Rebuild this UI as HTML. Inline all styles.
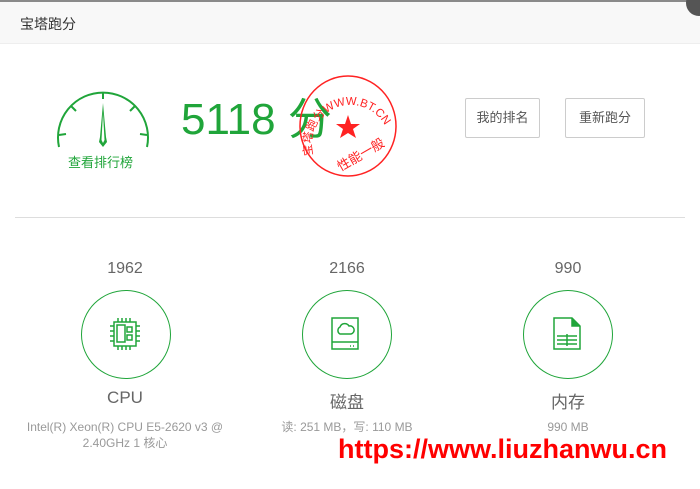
<!DOCTYPE html>
<html><head><meta charset="utf-8"><style>
*{margin:0;padding:0;box-sizing:border-box}
body{width:700px;height:489px;background:#fff;font-family:"Liberation Sans","Noto Sans CJK SC",sans-serif;position:relative;overflow:hidden}
.hdr{position:absolute;left:0;top:0;width:700px;height:44px;background:#f8f8f8;border-top:2px solid #8a8a8a;border-bottom:1px solid #eee}
.hdr span{position:absolute;left:20px;top:12px;font-size:14px;color:#333}
.close{position:absolute;left:686px;top:-10px;width:26px;height:26px;border-radius:50%;background:#555}
.abs{position:absolute}
.btn{position:absolute;top:98px;height:40px;border:1px solid #ccc;border-radius:2px;font-size:13px;color:#555;text-align:center;line-height:38px}
.num{position:absolute;top:260px;width:120px;text-align:center;font-size:16px;color:#666}
.circ{position:absolute;top:290px;width:90px;height:89px;border:1px solid #20a53a;border-radius:50%}
.lab{position:absolute;top:388px;width:200px;text-align:center;font-size:17px;color:#666}
.sm{position:absolute;top:419px;width:230px;text-align:center;font-size:12px;color:#999;line-height:16px}
</style></head><body>
<div class="hdr"><span>宝塔跑分</span></div>
<div class="close"></div>
<svg class="abs" style="left:49px;top:85px" width="110" height="70">
<path d="M10 62 A45 45 0 1 1 98 62" fill="none" stroke="#20a53a" stroke-width="2"/>
<g stroke="#20a53a" stroke-width="2">
<line x1="54" y1="7" x2="54" y2="14"/><line x1="22" y1="21" x2="27" y2="26"/><line x1="86" y1="21" x2="81" y2="26"/>
<line x1="10" y1="50" x2="17" y2="49"/><line x1="98" y1="50" x2="91" y2="49"/></g>
<path d="M54 18 L57 52 L58 57 L54 62 L50 57 L51 52 Z" fill="#20a53a"/>
<path d="M54 28 L55.5 55 L54 58 L52.5 55 Z" fill="#fff"/>
</svg>
<div class="abs" style="left:68px;top:152px;font-size:13px;color:#20a53a">查看排行榜</div>
<div class="abs" style="left:181px;top:94px;font-size:44px;color:#20a53a;line-height:52px">5118 分</div>
<svg class="abs" style="left:295px;top:73px" width="106" height="106">
<ellipse cx="53" cy="53" rx="48" ry="50" fill="none" stroke="#f22" stroke-width="1.5"/>
<polygon points="53,42 56,51 65,51 58,56 61,65 53,60 45,65 48,56 41,51 50,51" fill="#f22"/>
<defs><path id="tp" d="M18 82 A38 38 0 1 1 93 60"/></defs>
<text font-size="11.5" fill="#f22" font-family="Liberation Sans,Noto Sans CJK SC,sans-serif"><textPath href="#tp">宝塔跑分WWW.BT.CN</textPath></text>
<text x="40" y="92" font-size="13" fill="#f22" transform="rotate(-30 55 85)">性能一般</text>
</svg>
<div class="btn" style="left:465px;width:75px">我的排名</div>
<div class="btn" style="left:565px;width:80px">重新跑分</div>
<div class="abs" style="left:15px;top:217px;width:670px;height:1px;background:#ddd"></div>
<div class="num" style="left:65px">1962</div>
<div class="num" style="left:287px">2166</div>
<div class="num" style="left:508px">990</div>
<div class="circ" style="left:81px"></div>
<div class="circ" style="left:302px"></div>
<div class="circ" style="left:523px"></div>
<svg class="abs" style="left:108px;top:316px" width="36" height="36" fill="none" stroke="#20a53a" stroke-width="1.5">
<rect x="6" y="6" width="22" height="24"/><rect x="9" y="9" width="8" height="17"/><rect x="19" y="11" width="5" height="5"/><rect x="19" y="19" width="5" height="5"/>
<path d="M10 2v4M14 2v4M18 2v4M22 2v4M10 30v4M14 30v4M18 30v4M22 30v4M2 10h4M2 15h4M2 20h4M2 25h4M28 10h4M28 15h4M28 20h4M28 25h4"/></svg>
<svg class="abs" style="left:330px;top:316px" width="34" height="36" fill="none" stroke="#20a53a" stroke-width="1.5">
<rect x="2" y="2" width="26" height="31"/><line x1="2" y1="26" x2="28" y2="26"/>
<path d="M10 18a4 4 0 0 1 0-7 5 5 0 0 1 9-1 4 4 0 0 1 2 8z"/><path d="M20 30h1M23 30h1" /></svg>
<svg class="abs" style="left:552px;top:316px" width="34" height="36" fill="none" stroke="#20a53a" stroke-width="1.5">
<path d="M2 2h18l8 8v23h-26z"/><path d="M20 2v8h8" fill="#20a53a"/><path d="M5 20h20M5 24h20M5 28h20M15 18v12" /></svg>
<div class="lab" style="left:25px">CPU</div>
<div class="lab" style="left:247px">磁盘</div>
<div class="lab" style="left:468px">内存</div>
<div class="sm" style="left:10px">Intel(R) Xeon(R) CPU E5-2620 v3 @<br>2.40GHz 1 核心</div>
<div class="sm" style="left:232px">读: 251 MB，写: 110 MB</div>
<div class="sm" style="left:453px">990 MB</div>
<div class="abs" style="left:338px;top:434px;font-size:27px;font-weight:bold;color:#f00;white-space:nowrap;font-family:'Liberation Sans',sans-serif">https://www.liuzhanwu.cn</div>
</body></html>
